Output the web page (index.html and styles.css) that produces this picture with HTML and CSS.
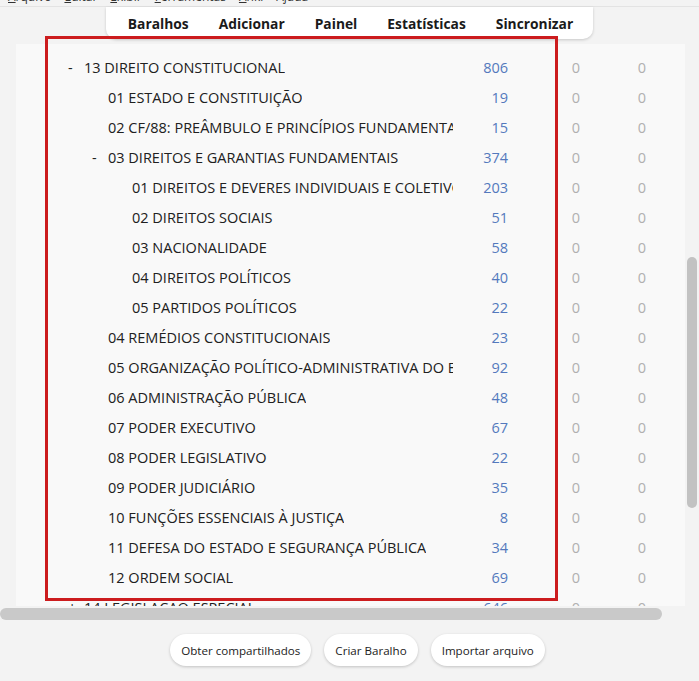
FILE: index.html
```html
<!DOCTYPE html>
<html>
	<head>
		<meta charset="UTF-8">
		<title>Baralhos</title>
		<link rel="stylesheet" href="styles.css">
	</head>
	<body>
		<div class="menubar">
			<ul>
				<li><u>A</u>rquivo</li>
				<li><u>E</u>ditar</li>
				<li><u>E</u>xibir</li>
				<li><u>F</u>erramentas</li>
				<li><u>A</u>nki</li>
				<li>A<u>j</u>uda</li>
			</ul>
		</div>

		<div class="toolbar-row">
			<nav class="toolbar">
				<a href="#">Baralhos</a>
				<a href="#">Adicionar</a>
				<a href="#">Painel</a>
				<a href="#">Estatísticas</a>
				<a href="#">Sincronizar</a>
			</nav>
		</div>

		<div class="main">
			<div class="decks">
				<div class="row depth1"><div class="name"><span class="collapse">-</span><span class="title">13 DIREITO CONSTITUCIONAL</span></div><span class="new">806</span><span class="due">0</span><span class="due">0</span></div>
				<div class="row depth2"><div class="name"><span class="collapse"></span><span class="title">01 ESTADO E CONSTITUIÇÃO</span></div><span class="new">19</span><span class="due">0</span><span class="due">0</span></div>
				<div class="row depth2"><div class="name"><span class="collapse"></span><span class="title">02 CF/88: PREÂMBULO E PRINCÍPIOS FUNDAMENTAIS</span></div><span class="new">15</span><span class="due">0</span><span class="due">0</span></div>
				<div class="row depth2"><div class="name"><span class="collapse">-</span><span class="title">03 DIREITOS E GARANTIAS FUNDAMENTAIS</span></div><span class="new">374</span><span class="due">0</span><span class="due">0</span></div>
				<div class="row depth3"><div class="name"><span class="collapse"></span><span class="title">01 DIREITOS E DEVERES INDIVIDUAIS E COLETIVOS</span></div><span class="new">203</span><span class="due">0</span><span class="due">0</span></div>
				<div class="row depth3"><div class="name"><span class="collapse"></span><span class="title">02 DIREITOS SOCIAIS</span></div><span class="new">51</span><span class="due">0</span><span class="due">0</span></div>
				<div class="row depth3"><div class="name"><span class="collapse"></span><span class="title">03 NACIONALIDADE</span></div><span class="new">58</span><span class="due">0</span><span class="due">0</span></div>
				<div class="row depth3"><div class="name"><span class="collapse"></span><span class="title">04 DIREITOS POLÍTICOS</span></div><span class="new">40</span><span class="due">0</span><span class="due">0</span></div>
				<div class="row depth3"><div class="name"><span class="collapse"></span><span class="title">05 PARTIDOS POLÍTICOS</span></div><span class="new">22</span><span class="due">0</span><span class="due">0</span></div>
				<div class="row depth2"><div class="name"><span class="collapse"></span><span class="title">04 REMÉDIOS CONSTITUCIONAIS</span></div><span class="new">23</span><span class="due">0</span><span class="due">0</span></div>
				<div class="row depth2"><div class="name"><span class="collapse"></span><span class="title">05 ORGANIZAÇÃO POLÍTICO-ADMINISTRATIVA DO ESTADO</span></div><span class="new">92</span><span class="due">0</span><span class="due">0</span></div>
				<div class="row depth2"><div class="name"><span class="collapse"></span><span class="title">06 ADMINISTRAÇÃO PÚBLICA</span></div><span class="new">48</span><span class="due">0</span><span class="due">0</span></div>
				<div class="row depth2"><div class="name"><span class="collapse"></span><span class="title">07 PODER EXECUTIVO</span></div><span class="new">67</span><span class="due">0</span><span class="due">0</span></div>
				<div class="row depth2"><div class="name"><span class="collapse"></span><span class="title">08 PODER LEGISLATIVO</span></div><span class="new">22</span><span class="due">0</span><span class="due">0</span></div>
				<div class="row depth2"><div class="name"><span class="collapse"></span><span class="title">09 PODER JUDICIÁRIO</span></div><span class="new">35</span><span class="due">0</span><span class="due">0</span></div>
				<div class="row depth2"><div class="name"><span class="collapse"></span><span class="title">10 FUNÇÕES ESSENCIAIS À JUSTIÇA</span></div><span class="new">8</span><span class="due">0</span><span class="due">0</span></div>
				<div class="row depth2"><div class="name"><span class="collapse"></span><span class="title">11 DEFESA DO ESTADO E SEGURANÇA PÚBLICA</span></div><span class="new">34</span><span class="due">0</span><span class="due">0</span></div>
				<div class="row depth2"><div class="name"><span class="collapse"></span><span class="title">12 ORDEM SOCIAL</span></div><span class="new">69</span><span class="due">0</span><span class="due">0</span></div>
				<div class="row depth1"><div class="name"><span class="collapse">+</span><span class="title">14 LEGISLAÇÃO ESPECIAL</span></div><span class="new">646</span><span class="due">0</span><span class="due">0</span></div>
			</div>
			<div class="vscroll"><div class="thumb"></div></div>
		</div>

		<div class="hscroll"></div>

		<div class="actions">
			<button>Obter compartilhados</button>
			<button>Criar Baralho</button>
			<button>Importar arquivo</button>
		</div>

		<div class="highlight"></div>
	</body>
</html>
```

FILE: styles.css
```css
* {
	padding: 0;
	margin: 0;
	box-sizing: border-box;
}
body {
	position: relative;
	width: 699px;
	height: 681px;
	overflow: hidden;
	background: #f3f3f3;
	font-family: "Open Sans", "Noto Sans", sans-serif;
	color: #202020;
}

/* window menu, scrolled mostly out of view */
.menubar {
	height: 7px;
	overflow: hidden;
	border-bottom: 1px solid #e3e3e3;
}
.menubar ul {
	list-style: none;
	display: flex;
	margin-top: -11px;
	padding-left: 8px;
	font-size: 12px;
	line-height: 16px;
	color: #333;
}
.menubar li {
	margin-right: 13px;
}

/* top toolbar */
.toolbar-row {
	display: flex;
	justify-content: center;
}
.toolbar {
	display: flex;
	height: 32px;
	padding: 0 5px 0 7px;
	background: #fff;
	border-radius: 0 0 10px 10px;
	box-shadow: 0 1px 3px rgba(0, 0, 0, 0.18);
}
.toolbar a {
	padding: 0 15px;
	line-height: 34px;
	font-size: 13.8px;
	font-weight: 700;
	color: #1a1a1a;
	text-decoration: none;
}

/* deck list */
.main {
	display: flex;
	margin-top: 5px;
}
.decks {
	width: 669px;
	height: 562px;
	margin-left: 16px;
	padding-top: 9px;
	overflow: hidden;
	background: #f9f9f9;
}
.row {
	display: grid;
	grid-template-columns: 437px 55px 72px 66px;
	height: 30px;
	line-height: 30px;
	font-size: 14.5px;
}
.name {
	display: flex;
	overflow: hidden;
	white-space: nowrap;
	padding-left: 44px;
}
.depth2 .name {
	padding-left: 68px;
}
.depth3 .name {
	padding-left: 92px;
}
.collapse {
	flex: none;
	width: 24px;
	padding-left: 8px;
}
.title {
	overflow: hidden;
}
.new {
	text-align: right;
	color: #5479bd;
}
.due {
	text-align: right;
	color: #b0b0b0;
}

.vscroll {
	width: 10px;
	margin-left: 2px;
	padding-top: 213px;
}
.vscroll .thumb {
	height: 251px;
	border-radius: 5px;
	background: #c2c2c2;
}

.hscroll {
	width: 662px;
	height: 12px;
	margin-top: 2px;
	border-radius: 6px;
	background: #c9c9c9;
}

/* bottom buttons */
.actions {
	display: flex;
	justify-content: center;
	gap: 13px;
	margin-top: 14px;
	padding-left: 16px;
}
.actions button {
	height: 32px;
	padding: 0 11px;
	border: none;
	border-radius: 16px;
	background: #fff;
	box-shadow: 0 1px 3px rgba(0, 0, 0, 0.2);
	font-family: "Open Sans", "Noto Sans", sans-serif;
	font-size: 11.6px;
	color: #222;
}

/* red marker around the selected branch */
.highlight {
	position: absolute;
	left: 45px;
	top: 36px;
	width: 513px;
	height: 565px;
	border: 3px solid #cc1c1e;
}
```
